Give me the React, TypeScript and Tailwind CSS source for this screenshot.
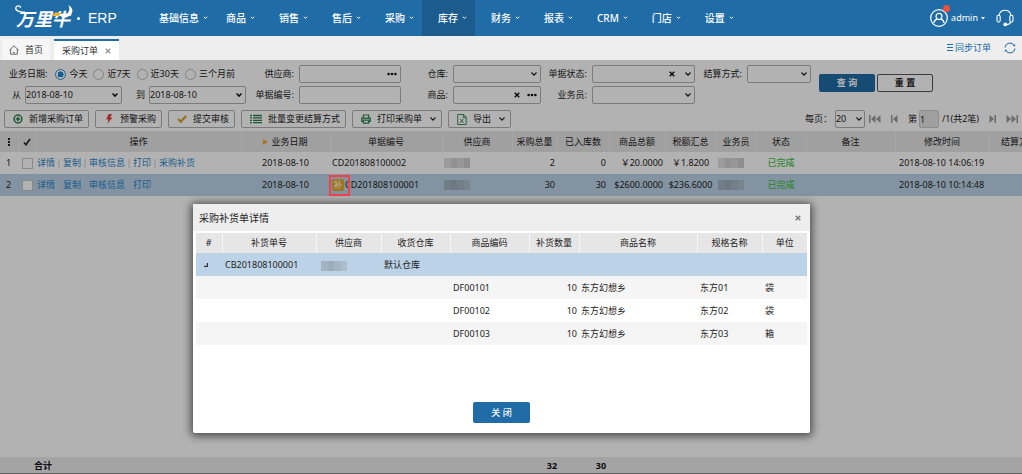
import type { ReactNode } from 'react';

const BODY_FONT = "font-['Noto_Sans','Noto_Sans_CJK_SC',sans-serif]";

const MENU = ['基础信息', '商品', '销售', '售后', '采购', '库存', '财务', '报表', 'CRM', '门店', '设置'];

function Chevron({ className = '' }: { className?: string }) {
  return (
    <svg viewBox="0 0 6 4" className={`h-1 w-1.5 shrink-0 ${className}`} fill="none" stroke="currentColor" strokeWidth="1.1" aria-hidden="true">
      <path d="M0.5 0.5 3 3.1 5.5 0.5" />
    </svg>
  );
}

function Cross({ className = '' }: { className?: string }) {
  return (
    <svg viewBox="0 0 6 6" className={`size-1.5 shrink-0 ${className}`} fill="none" stroke="currentColor" strokeWidth="1.4" aria-hidden="true">
      <path d="M0.7 0.7 5.3 5.3M5.3 0.7 0.7 5.3" />
    </svg>
  );
}

function Dots() {
  return (
    <svg viewBox="0 0 10 4" className="h-1 w-2.5 shrink-0" fill="currentColor" aria-hidden="true">
      <circle cx="1.6" cy="2" r="1.3" />
      <circle cx="5" cy="2" r="1.3" />
      <circle cx="8.4" cy="2" r="1.3" />
    </svg>
  );
}

function Logo() {
  return (
    <a href="#home" className="flex h-full w-[143px] shrink-0 items-center text-white">
      <span className="relative ml-3 flex h-full w-[62px] items-center pl-1 font-['Noto_Sans_CJK_SC',sans-serif] text-lg leading-5 font-bold italic">
        万里牛
        <svg viewBox="0 0 62 36" className="absolute inset-0 h-9 w-[62px]" fill="none" aria-hidden="true">
          <path d="M13 12C8 12.500 3 10.500 3.800 7.600 4.500 5.200 8.500 5.200 8.600 7.800" stroke="#fff" strokeWidth="1.300" />
          <path d="M48 15.500C54.500 15.500 59.500 12 56.500 5.300 63 8.500 61.500 16.500 51 18Z" fill="#fff" />
          <path d="M39.500 16 43 12.500H50L46.500 16Z" fill="#e8b53c" />
        </svg>
      </span>
      <span className="ml-[3px] size-[3px] rounded-full bg-white" />
      <span className="ml-2 font-['Liberation_Sans',sans-serif] text-sm leading-5">ERP</span>
    </a>
  );
}

function TopBar() {
  return (
    <header className="flex h-9 items-center bg-[#206ca6] text-white">
      <Logo />
      <nav className="flex h-full text-[10px] leading-4 font-medium">
        {MENU.map((item) => (
          <a
            key={item}
            href={`#${item}`}
            className={`flex h-full items-center gap-1 pr-2 pl-4 whitespace-nowrap first:pr-0.5 ${item === '库存' ? 'bg-[#1c5c8d]' : ''}`}
          >
            {item}
            <svg viewBox="0 0 5 4" className="h-1 w-[5px]" fill="none" stroke="currentColor" aria-hidden="true">
              <path d="M0.8 0.8 2.500 2.400 4.200 0.8" strokeWidth="1" />
            </svg>
          </a>
        ))}
      </nav>
      <div className="ml-auto flex items-center pr-2">
        <button type="button" className="flex items-center gap-[3px] text-[9px] leading-4">
          <span className="relative">
            <svg viewBox="0 0 18 18" className="size-[18px]" fill="none" stroke="#fff" strokeWidth="1.2" aria-hidden="true">
              <circle cx="9" cy="9" r="8.300" />
              <path d="M9 4.300c-1.800 0-3 1.200-3 3 0 1.200.5 2 1.300 2.600C5.500 10.600 4 11.500 4 14M9 4.300c1.800 0 3 1.200 3 3 0 1.200-.5 2-1.300 2.600C12.500 10.600 14 11.500 14 14M7.300 9.900c1 .7 2.400.7 3.400 0" />
            </svg>
            <span className="absolute -top-1 -right-0.5 size-[7px] rounded-full bg-[#f0513c]" />
          </span>
          admin
          <svg viewBox="0 0 4 3" className="h-[3px] w-1" fill="#fff" aria-hidden="true">
            <path d="M0 0h4L2 2.600Z" />
          </svg>
        </button>
        <a href="#support" aria-label="客服" className="ml-[11px]">
          <svg viewBox="0 0 18 18" className="size-[18px]" fill="none" stroke="#fff" strokeWidth="1.100" aria-hidden="true">
            <path d="M3 6.200C3.800 3 6 1.200 9 1.200s5.200 1.800 6 5M15 13c-1 2-2.800 2.700-5 2.700" />
            <rect x="1" y="6.200" width="3.200" height="7" rx="1.600" />
            <rect x="13.800" y="6.200" width="3.200" height="7" rx="1.600" />
            <circle cx="9.300" cy="15.400" r="1.400" fill="#fff" />
          </svg>
        </a>
      </div>
    </header>
  );
}

function TabBar() {
  return (
    <div className="flex h-6 items-end bg-[#eeeeee] pl-[3px] text-[9px] leading-4 text-[#333]">
      <a href="#home" className="flex h-[21px] w-[47px] items-center gap-1.5 bg-[#f6f6f6] pl-1.5">
        <svg viewBox="0 0 10 10" className="size-2.5" fill="none" stroke="#555" strokeWidth="0.9" aria-hidden="true">
          <path d="M0.4 5.200 5 0.8 9.600 5.200M1.700 4.200V9.200H8.300V4.200M4 7.700h2" />
        </svg>
        首页
      </a>
      <div className="ml-1 flex h-[21px] w-[65px] items-center justify-between border-t-2 border-[#206ca6] bg-white px-2">
        <a href="#orders">采购订单</a>
        <button type="button" aria-label="关闭标签" className="text-[#999]">
          <Cross />
        </button>
      </div>
      <div className="ml-auto flex h-6 items-center gap-[13px] pr-1.5 text-[#206ca6]">
        <a href="#sync" className="flex items-center gap-0.5">
          <svg viewBox="0 0 7 8" className="h-2 w-[7px]" fill="none" stroke="currentColor" strokeWidth="1" aria-hidden="true">
            <path d="M1 0.500h6M1 3.500h6M1 6.500h6" />
          </svg>
          同步订单
        </a>
        <button type="button" aria-label="刷新">
          <svg viewBox="0 0 12 12" className="size-3" fill="none" stroke="currentColor" strokeWidth="1" aria-hidden="true">
            <path d="M1 5.500A5 5 0 0 1 10.300 3.500M11 6.500A5 5 0 0 1 1.700 8.500" />
            <path d="M11.600 2.300 10.700 4.600 8.700 3.500ZM0.400 9.700 1.300 7.400 3.300 8.500Z" fill="currentColor" stroke="none" />
          </svg>
        </button>
      </div>
    </div>
  );
}

const BOX = 'h-[18px] rounded-[2px] border border-[#b0b0b0] bg-white';

type FieldProps = { id: string; label: string; width: string; kind: 'text' | 'select'; clear?: boolean; more?: boolean };

function Field({ id, label, width, kind, clear, more }: FieldProps) {
  return (
    <div className="flex items-center justify-end gap-[5px]">
      <label htmlFor={id}>{label}:</label>
      <div className={`relative ${width}`}>
        {kind === 'select' ? (
          <select id={id} className={`${BOX} block w-full appearance-none`} />
        ) : (
          <input id={id} type="text" className={`${BOX} block w-full px-1`} />
        )}
        <div className="absolute inset-y-0 right-1 flex items-center gap-[7px] text-[#111]">
          {clear && (
            <button type="button" aria-label={`清空${label}`}>
              <Cross />
            </button>
          )}
          {kind === 'select' && <Chevron className={clear ? 'ml-[3px]' : ''} />}
          {more && (
            <button type="button" aria-label={`选择${label}`}>
              <Dots />
            </button>
          )}
        </div>
      </div>
    </div>
  );
}

function DateBox({ id, label }: { id: string; label: string }) {
  return (
    <div className="flex items-center gap-1">
      <label htmlFor={id}>{label}</label>
      <div className="relative">
        <select id={id} className={`${BOX} block w-[97px] appearance-none`}>
          <option>2018-08-10</option>
        </select>
        <svg viewBox="0 0 6 4" className="pointer-events-none absolute top-[7px] right-1 h-1 w-1.5" fill="none" stroke="#111" strokeWidth="1.500" aria-hidden="true">
          <path d="M0.5 0.5 3 3.1 5.5 0.5" />
        </svg>
      </div>
    </div>
  );
}

function Filters() {
  const ranges = ['今天', '近7天', '近30天', '三个月前'];
  return (
    <form className="flex items-center gap-2 pt-[5px]">
      <div className="grid grid-cols-[246px_155px_140px_154px_116px] gap-y-[3px]">
        <fieldset className="flex h-[18px] items-center pl-[9px]">
          <legend className="float-left mr-2">业务日期:</legend>
          <div className="flex items-center gap-1.5">
            {ranges.map((r, i) => (
              <label key={r} className="flex items-center gap-[3px] whitespace-nowrap">
                <input
                  type="radio"
                  name="range"
                  defaultChecked={i === 0}
                  className="size-[11px] appearance-none rounded-full border border-[#bbb] bg-white checked:border-[#2b8ed6] checked:bg-[radial-gradient(circle,#1f86d0_0_3px,#fff_3px)]"
                />
                {r}
              </label>
            ))}
          </div>
        </fieldset>
        <Field id="supplier" label="供应商" width="w-[102px]" kind="text" more />
        <Field id="warehouse" label="仓库" width="w-[88px]" kind="select" />
        <Field id="state" label="单据状态" width="w-[103px]" kind="select" clear />
        <Field id="settle" label="结算方式" width="w-[64px]" kind="select" />
        <div className="flex items-center justify-between pl-3">
          <DateBox id="from" label="从" />
          <DateBox id="to" label="到" />
        </div>
        <Field id="number" label="单据编号" width="w-[102px]" kind="text" />
        <Field id="goods" label="商品" width="w-[88px]" kind="text" clear more />
        <Field id="staff" label="业务员" width="w-[103px]" kind="select" />
      </div>
      <div className="-mt-1 flex gap-0.5 text-[9px] leading-4 font-bold">
        <button type="button" className="h-[18px] w-14 rounded-[2px] bg-[#206ca6] text-white">查 询</button>
        <button type="reset" className="h-[18px] w-14 rounded-[2px] border border-[#555] bg-white text-[#222]">重 置</button>
      </div>
    </form>
  );
}

function ToolButton({ icon, children, menu }: { icon: ReactNode; children: ReactNode; menu?: boolean }) {
  return (
    <button type="button" className={`${BOX} flex shrink-0 items-center gap-1.5 pr-[5px] pl-2 whitespace-nowrap`}>
      {icon}
      {children}
      {menu && <Chevron className="ml-0.5" />}
    </button>
  );
}

const PAGER_ICON = 'h-2.5 shrink-0 fill-[#9a9a9a]';

function Toolbar() {
  return (
    <div className="flex items-center justify-between pt-1.5 pr-1 pb-[3px] pl-1">
      <div className="flex gap-1.5">
        <ToolButton
          icon={
            <svg viewBox="0 0 10 10" className="size-2.5" fill="none" stroke="#2c7d4d" aria-hidden="true">
              <circle cx="5" cy="5" r="3.900" strokeWidth="1.500" />
              <path d="M5 2.800v4.400M2.800 5h4.400" strokeWidth="1.500" />
            </svg>
          }
        >
          新增采购订单
        </ToolButton>
        <ToolButton
          icon={
            <svg viewBox="0 0 10 10" className="size-2.5" fill="#e2463c" aria-hidden="true">
              <path d="M4.500 0H8L6.300 3.500H8.500L3.200 10 4.500 5.500H2.200Z" />
            </svg>
          }
        >
          预警采购
        </ToolButton>
        <ToolButton
          icon={
            <svg viewBox="0 0 10 10" className="size-2.5" fill="none" stroke="#d9a22a" strokeWidth="2.200" aria-hidden="true">
              <path d="M1 5 3.800 7.600 9.200 2" />
            </svg>
          }
        >
          提交审核
        </ToolButton>
        <ToolButton
          icon={
            <svg viewBox="0 0 12 10" className="h-2.5 w-3" fill="none" stroke="#2c7d4d" strokeWidth="1.300" aria-hidden="true">
              <path d="M0 1.500h2M3 1.500h9M0 3.900h2M3 3.900h9M0 6.300h2M3 6.300h9M0 8.700h2M3 8.700h9" />
            </svg>
          }
        >
          批量变更结算方式
        </ToolButton>
        <ToolButton
          menu
          icon={
            <svg viewBox="0 0 10 10" className="size-2.5" fill="none" stroke="#2c7d4d" strokeWidth="1.200" aria-hidden="true">
              <path d="M2.300 4V1h5.400v3M2.300 7.500H0.700V4.200H9.300V7.500H7.700M2.300 6.200h5.400V9.200H2.300Z" />
            </svg>
          }
        >
          打印采购单
        </ToolButton>
        <ToolButton
          menu
          icon={
            <svg viewBox="0 0 10 11" className="h-[11px] w-2.5" fill="none" stroke="#2c7d4d" strokeWidth="0.9" aria-hidden="true">
              <path d="M0.700 0.500H6.500L9.200 3.200V10.500H0.700ZM6.300 0.500V3.400H9.200M3.200 4.800 6.400 8.800M6.400 4.800 3.200 8.800" />
            </svg>
          }
        >
          导出
        </ToolButton>
      </div>
      <div className="flex items-center whitespace-nowrap">
        <label htmlFor="size">每页：</label>
        <div className="relative ml-[3px]">
          <select id="size" className={`${BOX} block w-[30px] appearance-none`}>
            <option>20</option>
          </select>
          <Chevron className="pointer-events-none absolute top-[7px] right-[3px]" />
        </div>
        <button type="button" aria-label="首页" className="ml-1">
          <svg viewBox="0 0 12 10" className={`${PAGER_ICON} w-3`}><path d="M0 1h1.500v8H0ZM6.500 1v8L2 5ZM11.500 1v8L7 5Z" /></svg>
        </button>
        <button type="button" aria-label="上一页" className="ml-2.5">
          <svg viewBox="0 0 7 10" className={`${PAGER_ICON} w-[7px]`}><path d="M0 1h1.500v8H0ZM6.500 1v8L2 5Z" /></svg>
        </button>
        <label htmlFor="page" className="ml-2.5">第</label>
        <input id="page" defaultValue="1" className="ml-0.5 h-[18px] w-5 rounded-[2px] border border-[#ccc] bg-[#e4e4e4] leading-4" />
        <span className="ml-[3px]">/1(共2笔)</span>
        <button type="button" aria-label="下一页" className="ml-2.5">
          <svg viewBox="0 0 7 10" className={`${PAGER_ICON} w-[7px]`}><path d="M7 1H5.500v8H7ZM0.500 1v8L5 5Z" /></svg>
        </button>
        <button type="button" aria-label="末页" className="ml-2.5">
          <svg viewBox="0 0 12 10" className={`${PAGER_ICON} w-3`}><path d="M12 1h-1.500v8H12ZM5.500 1v8L10 5ZM0.500 1v8L5 5Z" /></svg>
        </button>
      </div>
    </div>
  );
}

/** Masked private name, shown as a row of grey blocks. */
function Mask({ shade = 'grey' }: { shade?: 'grey' | 'blue' }) {
  const tones = shade === 'grey' ? ['bg-[#dedede]', 'bg-[#d2d2d2]', 'bg-[#d8d8d8]', 'bg-[#cccccc]'] : ['bg-[#a3b3c2]', 'bg-[#9cacba]', 'bg-[#a6b5c2]', 'bg-[#adbfcd]'];
  return (
    <span className="flex h-2.5 w-[26px]">
      {tones.map((t) => (
        <span key={t} className={`h-full flex-1 ${t}`} />
      ))}
    </span>
  );
}

const ORDER_COLS = ['w-[18px]', 'w-[18px]', 'w-[205px]', 'w-[89px]', 'w-[112px]', 'w-[70px]', 'w-[45px]', 'w-[52px]', 'w-[56px]', 'w-[51px]', 'w-[40px]', 'w-[50px]', 'w-[89px]', 'w-[94px]', 'w-[60px]'];

function OrderCols() {
  return (
    <colgroup>
      {ORDER_COLS.map((w, i) => (
        <col key={i} className={w} />
      ))}
    </colgroup>
  );
}

const ORDERS = [
  { no: 'CD201808100002', actions: ['详情', '复制', '审核信息', '打印', '采购补货'], qty: 2, stocked: 0, total: '￥20.0000', tax: '￥1.8200', time: '2018-08-10 14:06:19', selected: false },
  { no: 'CD201808100001', actions: ['详情', '复制', '审核信息', '打印'], qty: 30, stocked: 30, total: '$2600.0000', tax: '$236.6000', time: '2018-08-10 10:14:48', selected: true },
];

function Orders() {
  const heads = ['业务日期', '单据编号', '供应商', '采购总量', '已入库数', '商品总额', '税额汇总', '业务员', '状态', '备注', '修改时间', '结算方式'];
  return (
    <table className="w-[1049px] table-fixed border-collapse whitespace-nowrap">
      <OrderCols />
      <thead>
        <tr className="h-[21px] bg-[#e6e6e6] [&>th]:border-r [&>th]:border-[#f0f0f0] [&>th]:font-normal">
          <th>
            <svg viewBox="0 0 2 8" className="mx-auto h-2 w-0.5" fill="#222" aria-label="序号">
              <path d="M0 0h2v2H0ZM0 3h2v2H0ZM0 6h2v2H0Z" />
            </svg>
          </th>
          <th>
            <svg viewBox="0 0 8 8" className="mx-auto size-2" fill="none" stroke="#222" strokeWidth="1.600" aria-label="选择">
              <path d="M1 4.500 3 6.800 7 1" />
            </svg>
          </th>
          <th>操作</th>
          {heads.map((h, i) => (
            <th key={h}>
              {i === 0 && (
                <svg viewBox="0 0 5 6" className="mr-[3px] inline h-1.5 w-[5px] align-baseline" fill="#f0a830" aria-hidden="true">
                  <path d="M0 0 5 3 0 6Z" />
                </svg>
              )}
              {h}
            </th>
          ))}
        </tr>
      </thead>
      <tbody>
        {ORDERS.map((o, i) => (
          <tr key={o.no} className={`h-[22px] ${o.selected ? 'bg-[#bcd3e7]' : 'bg-white'}`}>
            <td className="pl-1.5">{i + 1}</td>
            <td className="pl-1">
              <input type="checkbox" aria-label={o.no} className="block size-[11px] appearance-none border border-[#c4c4c4] bg-white" />
            </td>
            <td className="pl-px">
              <div className="flex text-[#1f86cc]">
                {o.actions.map((a, k) => (
                  <span key={a} className="flex">
                    {k > 0 && <span className={`w-2 text-center ${o.selected ? 'text-transparent' : 'text-[#bbb]'}`}>|</span>}
                    <a href={`#${o.no}`}>{a}</a>
                  </span>
                ))}
              </div>
            </td>
            <td className="text-center">2018-08-10</td>
            <td className="pl-0.5">
              {o.selected ? (
                <div className="relative flex items-center gap-px">
                  <span className="flex size-3 items-center justify-center rounded-[2px] bg-[#e3ab2c] text-white">补</span>
                  {o.no}
                  <span className="absolute -top-[3px] -left-[3px] z-20 h-[21px] w-[21px] border-2 border-[#f2424a]" />
                </div>
              ) : (
                o.no
              )}
            </td>
            <td className="pl-0.5"><Mask shade={o.selected ? 'blue' : 'grey'} /></td>
            <td className="pr-0.5 text-right">{o.qty}</td>
            <td className="pr-[3px] text-right">{o.stocked}</td>
            <td className="pr-0.5 text-right">{o.total}</td>
            <td className="text-center">{o.tax}</td>
            <td className="pl-0.5"><Mask shade={o.selected ? 'blue' : 'grey'} /></td>
            <td className="text-center font-medium text-[#48c048]">已完成</td>
            <td />
            <td className="pl-1">{o.time}</td>
            <td />
          </tr>
        ))}
      </tbody>
    </table>
  );
}

function Totals() {
  return (
    <div className="mt-auto overflow-hidden border-b border-[#888] bg-[#ebebeb]">
      <table className="w-[1049px] table-fixed border-collapse font-bold text-[#111]">
        <OrderCols />
        <tbody>
          <tr className="h-4">
            <td colSpan={6} className="pt-0.5 pl-[34px]">合计</td>
            <td className="pt-0.5 text-right">32</td>
            <td className="pt-0.5 pr-[3px] text-right">30</td>
            <td colSpan={7} />
          </tr>
        </tbody>
      </table>
    </div>
  );
}

const DETAIL_COLS: [string, string][] = [
  ['#', 'w-[26px]'],
  ['补货单号', 'w-[94px]'],
  ['供应商', 'w-[65px]'],
  ['收货仓库', 'w-[69px]'],
  ['商品编码', 'w-[79px]'],
  ['补货数量', 'w-[50px]'],
  ['商品名称', 'w-[118px]'],
  ['规格名称', 'w-[65px]'],
  ['单位', 'w-[45px]'],
];

const DETAILS = [
  ['DF00101', '东方01', '袋'],
  ['DF00102', '东方02', '袋'],
  ['DF00103', '东方03', '箱'],
];

function DetailDialog() {
  return (
    <section
      role="dialog"
      aria-labelledby="dialog-title"
      className="absolute top-36 left-[193px] z-30 flex min-h-[229px] w-[617px] flex-col rounded-[2px] bg-white shadow-[0_1px_8px_2px_rgba(0,0,0,0.6)]"
    >
      <div className="flex h-[27px] items-center justify-between bg-[#eeeeee] pr-[9px] pl-1.5">
        <h2 id="dialog-title" className="text-[10px] leading-4">采购补货单详情</h2>
        <button type="button" aria-label="关闭" className="text-[#777]">
          <Cross />
        </button>
      </div>
      <div className="px-[3px] pt-0.5">
        <table className="w-full table-fixed border-collapse whitespace-nowrap">
          <thead>
            <tr className="h-5 bg-[#e6e6e6]">
              {DETAIL_COLS.map(([name, w]) => (
                <th key={name} className={`${w} border-r border-[#f6f6f6] font-normal last:border-r-0`}>{name}</th>
              ))}
            </tr>
          </thead>
          <tbody>
            <tr className="h-[23px] bg-[#bcd3e7]">
              <td>
                <svg viewBox="0 0 4 4" className="ml-2 size-1" fill="none" stroke="#333" strokeWidth="1.200" aria-hidden="true">
                  <path d="M3.400 0V3.400H0" />
                </svg>
              </td>
              <td className="pl-[3px]">CB201808100001</td>
              <td className="pt-[3px] pl-[5px]"><Mask shade="blue" /></td>
              <td className="pl-[3px]">默认仓库</td>
              <td colSpan={5} />
            </tr>
            {DETAILS.map(([code, spec, unit]) => (
              <tr key={code} className="h-[23px] odd:bg-white even:bg-[#f5f5f5]">
                <td colSpan={4} />
                <td className="pl-[3px]">{code}</td>
                <td className="pr-0.5 text-right">10</td>
                <td className="pl-0.5">东方幻想乡</td>
                <td className="pl-[3px]">{spec}</td>
                <td className="pl-[3px]">{unit}</td>
              </tr>
            ))}
          </tbody>
        </table>
      </div>
      <button type="button" className="mx-auto mt-auto mb-2.5 h-[21px] w-[57px] rounded-[2px] bg-[#206ca6] text-[9px] leading-4 font-medium text-white">
        关 闭
      </button>
    </section>
  );
}

export default function App() {
  return (
    <div className={`flex min-h-screen flex-col overflow-hidden bg-white text-[9px] leading-[14px] text-[#222] ${BODY_FONT}`}>
      <TopBar />
      <TabBar />
      <main className="relative flex flex-1 flex-col overflow-hidden">
        <Filters />
        <Toolbar />
        <Orders />
        <Totals />
        <div className="absolute inset-0 z-10 bg-black/30" />
        <DetailDialog />
      </main>
    </div>
  );
}
